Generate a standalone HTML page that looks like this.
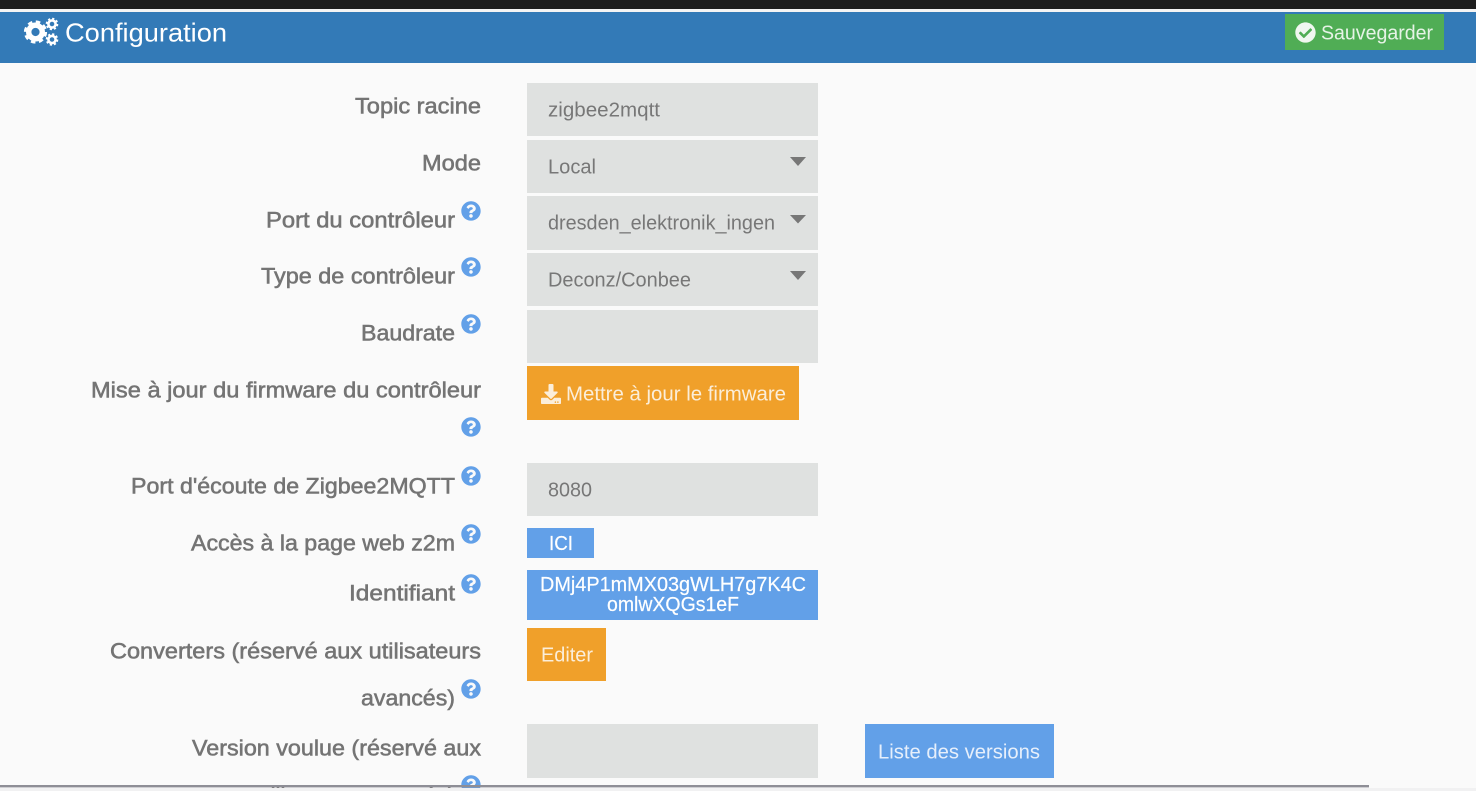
<!DOCTYPE html>
<html>
<head>
<meta charset="utf-8">
<title>Configuration</title>
<style>
html,body{margin:0;padding:0;width:1476px;height:791px;overflow:hidden;background:#fafafa}
svg{display:block}
text{font-family:"Liberation Sans",Arial,sans-serif}
.l{font-size:22px;fill:#747474;stroke:#747474;stroke-width:.55px}
.i{font-size:20px;fill:#777}
.b{font-size:20px;fill:#fbeeda}
.w{font-size:20px;fill:#fff;stroke:#fff;stroke-width:.2px}
</style>
</head>
<body>
<svg width="1476" height="791" viewBox="0 0 1476 791" xmlns="http://www.w3.org/2000/svg">
<defs>
<path id="q" d="M504 256c0 136.997-111.043 248-248 248S8 392.997 8 256C8 119.083 119.043 8 256 8s248 111.083 248 248zM262.655 90c-54.497 0-89.255 22.957-116.549 63.758-3.536 5.286-2.353 12.415 2.715 16.258l34.699 26.31c5.205 3.947 12.621 3.008 16.665-2.122 17.864-22.658 30.113-35.797 57.303-35.797 20.429 0 45.698 13.148 45.698 32.958 0 14.976-12.363 22.667-32.534 33.976C247.128 238.528 216 254.941 216 296v4c0 6.627 5.373 12 12 12h56c6.627 0 12-5.373 12-12v-1.333c0-28.462 83.186-29.647 83.186-106.667 0-58.002-60.165-102-116.531-102zM256 338c-25.365 0-46 20.635-46 46 0 25.364 20.635 46 46 46s46-20.636 46-46c0-25.365-20.635-46-46-46z"/>
</defs>
<rect width="1476" height="791" fill="#fafafa"/>
<rect width="1476" height="9" fill="#1e1e1e"/>
<rect y="9" width="1476" height="3" fill="#f4f4f4"/>
<rect y="12" width="1476" height="51" fill="#337ab7"/>

<!-- cogs -->
<g fill="none" stroke="#fff">
<circle cx="35.5" cy="32" r="6.8" stroke-width="5.4"/>
<circle cx="35.5" cy="32" r="10" stroke-width="3.2" stroke-dasharray="4.4 3.45"/>
<circle cx="52" cy="24" r="3.6" stroke-width="2.6"/>
<circle cx="52" cy="24" r="5.2" stroke-width="2.2" stroke-dasharray="2.1 1.98"/>
<circle cx="52" cy="39.5" r="3.6" stroke-width="2.6"/>
<circle cx="52" cy="39.5" r="5.2" stroke-width="2.2" stroke-dasharray="2.1 1.98"/>
</g>
<text x="65" y="41.5" font-size="26" fill="#fff" textLength="162" lengthAdjust="spacingAndGlyphs">Configuration</text>

<rect x="1285" y="14" width="159" height="36" fill="#50ad55"/>
<svg x="1295" y="22" width="21" height="21" viewBox="0 0 512 512"><path fill="#f0f7f0" d="M504 256c0 136.967-111.033 248-248 248S8 392.967 8 256 119.033 8 256 8s248 111.033 248 248zM227.314 387.314l184-184c6.248-6.248 6.248-16.379 0-22.627l-22.627-22.627c-6.248-6.249-16.379-6.249-22.628 0L216 308.118l-70.059-70.059c-6.248-6.248-16.379-6.248-22.628 0l-22.627 22.627c-6.248 6.248-6.248 16.379 0 22.627l104 104c6.249 6.249 16.379 6.249 22.628.001z"/></svg>
<text x="1321" y="39.5" font-size="20" fill="#e6f3e6" textLength="112" lengthAdjust="spacingAndGlyphs">Sauvegarder</text>

<!-- inputs -->
<g fill="#dfe1e0">
<rect x="527" y="83" width="291" height="53"/>
<rect x="527" y="140" width="291" height="53"/>
<rect x="527" y="196" width="291" height="54"/>
<rect x="527" y="253" width="291" height="53"/>
<rect x="527" y="310" width="291" height="53"/>
<rect x="527" y="463" width="291" height="53"/>
<rect x="527" y="724" width="291" height="54"/>
</g>
<g fill="#777">
<polygon points="790,157 806,157 798,166"/>
<polygon points="790,215 806,215 798,223.5"/>
<polygon points="790,271 806,271 798,280"/>
</g>

<!-- labels -->
<text class="l" x="355" y="113.5" textLength="126" lengthAdjust="spacingAndGlyphs">Topic racine</text>
<text class="l" x="422" y="170.5" textLength="59" lengthAdjust="spacingAndGlyphs">Mode</text>
<text class="l" x="266" y="227.5" textLength="189" lengthAdjust="spacingAndGlyphs">Port du contrôleur</text>
<text class="l" x="261" y="283.5" textLength="194" lengthAdjust="spacingAndGlyphs">Type de contrôleur</text>
<text class="l" x="361" y="340.5" textLength="94" lengthAdjust="spacingAndGlyphs">Baudrate</text>
<text class="l" x="91" y="397.5" textLength="390" lengthAdjust="spacingAndGlyphs">Mise à jour du firmware du contrôleur</text>
<text class="l" x="131" y="493.5" textLength="324" lengthAdjust="spacingAndGlyphs">Port d'écoute de Zigbee2MQTT</text>
<text class="l" x="191" y="550.5" textLength="264" lengthAdjust="spacingAndGlyphs">Accès à la page web z2m</text>
<text class="l" x="349" y="600.5" textLength="106" lengthAdjust="spacingAndGlyphs">Identifiant</text>
<text class="l" x="110" y="658.5" textLength="371" lengthAdjust="spacingAndGlyphs">Converters (réservé aux utilisateurs</text>
<text class="l" x="361" y="705.5" textLength="94" lengthAdjust="spacingAndGlyphs">avancés)</text>
<text class="l" x="192" y="755.5" textLength="289" lengthAdjust="spacingAndGlyphs">Version voulue (réservé aux</text>
<text class="l" x="252" y="803" textLength="203" lengthAdjust="spacingAndGlyphs">utilisateurs avancés)</text>

<!-- help icons -->
<g fill="#62a0e8">
<use href="#q" transform="translate(461 201) scale(.039)"/>
<use href="#q" transform="translate(461 257) scale(.039)"/>
<use href="#q" transform="translate(461 314) scale(.039)"/>
<use href="#q" transform="translate(461 417) scale(.039)"/>
<use href="#q" transform="translate(461 466) scale(.039)"/>
<use href="#q" transform="translate(461 524) scale(.039)"/>
<use href="#q" transform="translate(461 574) scale(.039)"/>
<use href="#q" transform="translate(461 679) scale(.039)"/>
<use href="#q" transform="translate(461 775) scale(.039)"/>
</g>

<!-- input text -->
<text class="i" x="548" y="116.5" textLength="112" lengthAdjust="spacingAndGlyphs">zigbee2mqtt</text>
<text class="i" x="548" y="173.5" textLength="48" lengthAdjust="spacingAndGlyphs">Local</text>
<text class="i" x="548" y="229.5" textLength="227" lengthAdjust="spacingAndGlyphs">dresden_elektronik_ingen</text>
<text class="i" x="548" y="286.5" textLength="143" lengthAdjust="spacingAndGlyphs">Deconz/Conbee</text>
<text class="i" x="548" y="496.5" textLength="44" lengthAdjust="spacingAndGlyphs">8080</text>

<!-- firmware button -->
<rect x="527" y="366" width="272" height="54" fill="#f0a02a"/>
<svg x="541" y="384" width="20" height="20" viewBox="0 0 512 512"><path fill="#fbeeda" d="M216 0h80c13.3 0 24 10.7 24 24v168h87.7c17.8 0 26.7 21.5 14.1 34.1L269.7 378.3c-7.5 7.5-19.8 7.5-27.3 0L90.1 226.1c-12.6-12.6-3.7-34.1 14.1-34.1H192V24c0-13.3 10.7-24 24-24zm296 376v112c0 13.3-10.7 24-24 24H24c-13.3 0-24-10.7-24-24V376c0-13.3 10.7-24 24-24h146.7l49 49c20.1 20.1 52.5 20.1 72.6 0l49-49H488c13.3 0 24 10.7 24 24zm-124 88c0-11-9-20-20-20s-20 9-20 20 9 20 20 20 20-9 20-20zm64 0c0-11-9-20-20-20s-20 9-20 20 9 20 20 20 20-9 20-20z"/></svg>
<text class="b" x="566" y="400.5" textLength="220" lengthAdjust="spacingAndGlyphs">Mettre à jour le firmware</text>

<!-- badges -->
<rect x="527" y="528" width="67" height="30" fill="#62a0e8"/>
<text class="w" x="549" y="550" textLength="24" lengthAdjust="spacingAndGlyphs">ICI</text>
<rect x="527" y="570" width="291" height="50" fill="#62a0e8"/>
<text class="w" x="540" y="591" textLength="266" lengthAdjust="spacingAndGlyphs">DMj4P1mMX03gWLH7g7K4C</text>
<text class="w" x="607" y="611" textLength="132" lengthAdjust="spacingAndGlyphs">omlwXQGs1eF</text>

<rect x="527" y="628" width="79" height="53" fill="#f0a02a"/>
<text class="b" x="541" y="661.5" textLength="52" lengthAdjust="spacingAndGlyphs">Editer</text>

<rect x="865" y="724" width="189" height="54" fill="#62a0e8"/>
<text x="878" y="758.5" font-size="20" fill="#e6effb" textLength="162" lengthAdjust="spacingAndGlyphs">Liste des versions</text>

<!-- bottom strip -->
<rect y="788" width="1476" height="3" fill="#f1f1f2"/>
<rect y="785" width="1369" height="2.4" fill="#8e8e96"/>
</svg>
</body>
</html>
